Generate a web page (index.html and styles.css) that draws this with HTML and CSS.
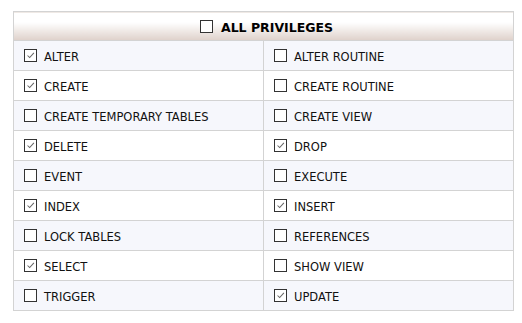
FILE: index.html
```html
<!DOCTYPE html>
<html>
  <head>
    <meta charset="UTF-8" />
    <title>Privileges</title>
    <link rel="stylesheet" href="styles.css">
  </head>
  <body>
    <div class="wrap">
      <table class="privs">
        <thead>
          <tr>
            <th colspan="2">
              <label class="priv priv-all"><span class="box"></span>ALL PRIVILEGES</label>
            </th>
          </tr>
        </thead>
        <tbody>
          <tr>
            <td><label class="priv"><span class="box on"><svg viewBox="0 0 13 13"><path d="M3 6.5 L5.5 9 L10.5 3.5" /></svg></span>ALTER</label></td>
            <td><label class="priv"><span class="box"></span>ALTER ROUTINE</label></td>
          </tr>
          <tr>
            <td><label class="priv"><span class="box on"><svg viewBox="0 0 13 13"><path d="M3 6.5 L5.5 9 L10.5 3.5" /></svg></span>CREATE</label></td>
            <td><label class="priv"><span class="box"></span>CREATE ROUTINE</label></td>
          </tr>
          <tr>
            <td><label class="priv"><span class="box"></span>CREATE TEMPORARY TABLES</label></td>
            <td><label class="priv"><span class="box"></span>CREATE VIEW</label></td>
          </tr>
          <tr>
            <td><label class="priv"><span class="box on"><svg viewBox="0 0 13 13"><path d="M3 6.5 L5.5 9 L10.5 3.5" /></svg></span>DELETE</label></td>
            <td><label class="priv"><span class="box on"><svg viewBox="0 0 13 13"><path d="M3 6.5 L5.5 9 L10.5 3.5" /></svg></span>DROP</label></td>
          </tr>
          <tr>
            <td><label class="priv"><span class="box"></span>EVENT</label></td>
            <td><label class="priv"><span class="box"></span>EXECUTE</label></td>
          </tr>
          <tr>
            <td><label class="priv"><span class="box on"><svg viewBox="0 0 13 13"><path d="M3 6.5 L5.5 9 L10.5 3.5" /></svg></span>INDEX</label></td>
            <td><label class="priv"><span class="box on"><svg viewBox="0 0 13 13"><path d="M3 6.5 L5.5 9 L10.5 3.5" /></svg></span>INSERT</label></td>
          </tr>
          <tr>
            <td><label class="priv"><span class="box"></span>LOCK TABLES</label></td>
            <td><label class="priv"><span class="box"></span>REFERENCES</label></td>
          </tr>
          <tr>
            <td><label class="priv"><span class="box on"><svg viewBox="0 0 13 13"><path d="M3 6.5 L5.5 9 L10.5 3.5" /></svg></span>SELECT</label></td>
            <td><label class="priv"><span class="box"></span>SHOW VIEW</label></td>
          </tr>
          <tr>
            <td><label class="priv"><span class="box"></span>TRIGGER</label></td>
            <td><label class="priv"><span class="box on"><svg viewBox="0 0 13 13"><path d="M3 6.5 L5.5 9 L10.5 3.5" /></svg></span>UPDATE</label></td>
          </tr>
        </tbody>
      </table>
    </div>
  </body>
</html>
```

FILE: styles.css
```css
*,
*::after,
*::before {
  box-sizing: border-box;
}
body {
  margin: 0;
  font-family: 'DejaVu Sans', Verdana, sans-serif;
  font-size: 11.5px;
  color: #111;
  background-color: #fff;
}
.wrap {
  padding: 11px 8px 0 13px;
}
/* privilege grid */
.privs {
  width: 501px;
  border-collapse: collapse;
  border: 1px solid #d3d3d3;
  table-layout: fixed;
}
.privs th {
  height: 29px;
  padding: 2px 0 0;
  text-align: center;
  font-size: 12.5px;
  font-weight: bold;
  color: #000;
  background: linear-gradient(#fff 35%, #ded1ca);
  border-bottom: 1px solid #d3d3d3;
}
.privs td {
  height: 30px;
  padding: 2px 0 0 10px;
  border: 1px solid #d3d3d3;
}
.privs tbody tr:nth-child(odd) td {
  background-color: #f6f7fc;
}
.priv {
  display: flex;
  align-items: center;
  gap: 7px;
}
.priv-all {
  justify-content: center;
  gap: 8px;
  padding-left: 6px;
}
/* checkbox look */
.box {
  display: inline-block;
  width: 13px;
  height: 13px;
  border: 1px solid #333;
  background-color: #fff;
  flex: none;
  position: relative;
  top: -1px;
}
.box svg {
  display: block;
  width: 11px;
  height: 11px;
  fill: none;
  stroke: #666;
  stroke-width: 1.2;
}
```
